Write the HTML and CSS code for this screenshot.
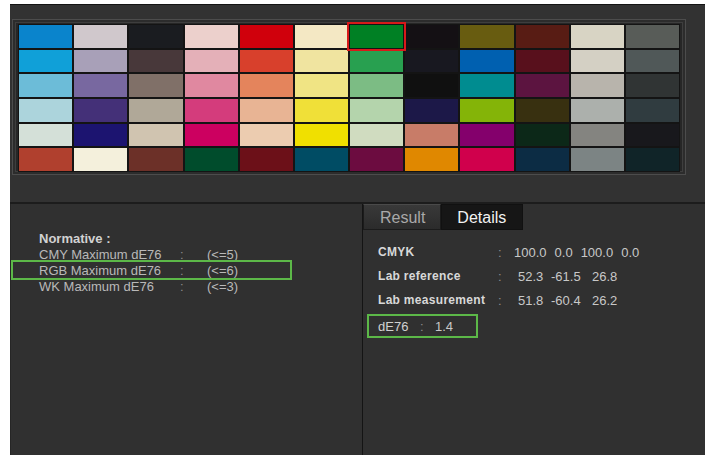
FILE: index.html
```html
<!DOCTYPE html>
<html lang="en">
<head>
<meta charset="utf-8">
<title>Colour check</title>
<link rel="stylesheet" href="styles.css">
</head>
<body>
<div class="app">
  <div class="palette">
    <div class="frame">
      <div class="grid">
        <div class="sw" style="background:#0a84cc"></div>
        <div class="sw" style="background:#d0c8cc"></div>
        <div class="sw" style="background:#1a1c20"></div>
        <div class="sw" style="background:#ecd0cc"></div>
        <div class="sw" style="background:#d0000c"></div>
        <div class="sw" style="background:#f4e8c4"></div>
        <div class="sw selected" style="background:#008024"></div>
        <div class="sw" style="background:#141014"></div>
        <div class="sw" style="background:#685c10"></div>
        <div class="sw" style="background:#581c14"></div>
        <div class="sw" style="background:#d8d4c4"></div>
        <div class="sw" style="background:#585c58"></div>

        <div class="sw" style="background:#10a0d8"></div>
        <div class="sw" style="background:#a8a0b8"></div>
        <div class="sw" style="background:#48383a"></div>
        <div class="sw" style="background:#e4b0b8"></div>
        <div class="sw" style="background:#d8402c"></div>
        <div class="sw" style="background:#f0e4a0"></div>
        <div class="sw" style="background:#28a050"></div>
        <div class="sw" style="background:#181820"></div>
        <div class="sw" style="background:#0060b0"></div>
        <div class="sw" style="background:#58101c"></div>
        <div class="sw" style="background:#d4d0c4"></div>
        <div class="sw" style="background:#505858"></div>

        <div class="sw" style="background:#6cbcd8"></div>
        <div class="sw" style="background:#7868a0"></div>
        <div class="sw" style="background:#807068"></div>
        <div class="sw" style="background:#e088a0"></div>
        <div class="sw" style="background:#e4845c"></div>
        <div class="sw" style="background:#f0e484"></div>
        <div class="sw" style="background:#7cbc84"></div>
        <div class="sw" style="background:#101010"></div>
        <div class="sw" style="background:#008c90"></div>
        <div class="sw" style="background:#5c1440"></div>
        <div class="sw" style="background:#b8b4ac"></div>
        <div class="sw" style="background:#303434"></div>

        <div class="sw" style="background:#acd4dc"></div>
        <div class="sw" style="background:#443078"></div>
        <div class="sw" style="background:#b0a898"></div>
        <div class="sw" style="background:#d43c7c"></div>
        <div class="sw" style="background:#e8b494"></div>
        <div class="sw" style="background:#f0e038"></div>
        <div class="sw" style="background:#b4d4ac"></div>
        <div class="sw" style="background:#1c1848"></div>
        <div class="sw" style="background:#84b408"></div>
        <div class="sw" style="background:#383010"></div>
        <div class="sw" style="background:#acb0ac"></div>
        <div class="sw" style="background:#303c40"></div>

        <div class="sw" style="background:#d4e0d8"></div>
        <div class="sw" style="background:#1c1470"></div>
        <div class="sw" style="background:#d0c4b0"></div>
        <div class="sw" style="background:#cc0060"></div>
        <div class="sw" style="background:#ecccb0"></div>
        <div class="sw" style="background:#f0e000"></div>
        <div class="sw" style="background:#d0dcc0"></div>
        <div class="sw" style="background:#c87c68"></div>
        <div class="sw" style="background:#84006c"></div>
        <div class="sw" style="background:#0c2818"></div>
        <div class="sw" style="background:#848480"></div>
        <div class="sw" style="background:#18181c"></div>

        <div class="sw" style="background:#b0402e"></div>
        <div class="sw" style="background:#f4f0dc"></div>
        <div class="sw" style="background:#6c3028"></div>
        <div class="sw" style="background:#004c2c"></div>
        <div class="sw" style="background:#6c1018"></div>
        <div class="sw" style="background:#004c64"></div>
        <div class="sw" style="background:#6c0c40"></div>
        <div class="sw" style="background:#e08800"></div>
        <div class="sw" style="background:#d0004c"></div>
        <div class="sw" style="background:#0c2c44"></div>
        <div class="sw" style="background:#7c8484"></div>
        <div class="sw" style="background:#102428"></div>
      </div>
    </div>
  </div>

  <div class="lower">
    <div class="normative">
      <div class="norm-title">Normative :</div>
      <div class="norm-row"><span class="n-label">CMY Maximum dE76</span><span class="n-colon">:</span><span class="n-val">(&lt;=5)</span></div>
      <div class="norm-row hl"><span class="n-label">RGB Maximum dE76</span><span class="n-colon">:</span><span class="n-val">(&lt;=6)</span></div>
      <div class="norm-row"><span class="n-label">WK Maximum dE76</span><span class="n-colon">:</span><span class="n-val">(&lt;=3)</span></div>
    </div>

    <div class="details">
      <div class="tabs">
        <div class="tab">Result</div>
        <div class="tab active">Details</div>
      </div>
      <div class="rows">
        <div class="drow">
          <span class="d-label">CMYK</span><span class="d-colon">:</span>
          <span class="d-vals cmyk"><span>100.0</span><span>0.0</span><span>100.0</span><span>0.0</span></span>
        </div>
        <div class="drow">
          <span class="d-label">Lab reference</span><span class="d-colon">:</span>
          <span class="d-vals lab"><span>52.3</span><span>-61.5</span><span>26.8</span></span>
        </div>
        <div class="drow">
          <span class="d-label">Lab measurement</span><span class="d-colon">:</span>
          <span class="d-vals lab"><span>51.8</span><span>-60.4</span><span>26.2</span></span>
        </div>
        <div class="de-box">
          <span class="de-label">dE76</span><span class="de-colon">:</span><span class="de-val">1.4</span>
        </div>
      </div>
    </div>
  </div>
</div>
</body>
</html>
```

FILE: styles.css
```css
html, body {
  margin: 0;
  padding: 0;
  background: #ffffff;
}

body {
  font-family: "Liberation Sans", Arial, sans-serif;
}

.app {
  margin: 4px 0 0 10px;
  width: 695px;
  height: 451px;
  background: #323232;
  border-top: 1px solid #141414;
  display: flex;
  flex-direction: column;
  overflow: hidden;
}

/* colour patch chart */
.palette {
  height: 199px;
  flex: none;
  padding: 14px 0 0 2px;
  box-sizing: border-box;
  border-bottom: 2px solid #1c1c1c;
}

.frame {
  width: 674px;
  box-sizing: border-box;
  border: 1px solid #4c4c4c;
  box-shadow: inset 0 0 0 2px #2c2c2c, inset 0 0 0 3px #3e3e3e;
  background: #262626;
  padding: 5px 6px 3px 6px;
}

.grid {
  display: grid;
  grid-template-columns: repeat(12, 1fr);
  grid-template-rows: repeat(6, 1fr);
  gap: 2px;
  height: 146px;
  background: #151515;
}

.sw {
  box-shadow: 0 0 0 1px #141414;
}

.sw.selected {
  position: relative;
  z-index: 1;
  outline: 2px solid #d81a1a;
  outline-offset: 1px;
}

/* lower half */
.lower {
  flex: 1;
  display: flex;
  background: #303030;
}

.normative {
  width: 353px;
  flex: none;
  border-left: 1px solid #262626;
  border-right: 1px solid #141414;
  box-sizing: border-box;
  padding: 27px 0 0 28px;
  font-size: 13px;
  line-height: 16px;
  color: #b9b9b9;
}

.norm-title {
  font-weight: bold;
  color: #d2d2d2;
}

.norm-row {
  display: flex;
  position: relative;
}

.n-label {
  width: 141px;
}

.n-colon {
  width: 27px;
  color: #8a8a8a;
}

.norm-row.hl::after {
  content: "";
  position: absolute;
  left: -28px;
  top: -3px;
  width: 281px;
  height: 20px;
  box-sizing: border-box;
  border: 2px solid #5cb848;
}

.details {
  flex: 1;
  display: flex;
  flex-direction: column;
}

.tabs {
  display: flex;
  height: 26px;
}

.tab {
  box-sizing: border-box;
  height: 26px;
  padding: 0 15px 0 16px;
  font-size: 16px;
  line-height: 25px;
  color: #a9a9a9;
  background: linear-gradient(#393939, #2b2b2b);
  border: 1px solid #1b1b1b;
  border-top-color: #4a4a4a;
}

.tab.active {
  color: #f2f2f2;
  background: #161616;
  border-color: #111111;
  padding: 0 16px 0 15px;
}

.rows {
  padding: 10px 0 0 15px;
  font-size: 13px;
  color: #c8c8c8;
}

.drow {
  display: flex;
  height: 24px;
  align-items: center;
}

.d-label {
  width: 120px;
  font-size: 12px;
  font-weight: bold;
  letter-spacing: 0.3px;
  color: #d8d8d8;
}

.d-colon {
  width: 16px;
  color: #8c8c8c;
}

.d-vals {
  display: flex;
}

.d-vals.cmyk span {
  margin-right: 8px;
}

.d-vals.lab {
  padding-left: 4px;
}

.d-vals.lab span:nth-child(1) {
  width: 33px;
}

.d-vals.lab span:nth-child(2) {
  width: 41px;
}

.de-box {
  margin: 2px 0 0 -11px;
  width: 111px;
  height: 24px;
  box-sizing: border-box;
  border: 2px solid #5cb848;
  display: flex;
  align-items: center;
  padding-left: 9px;
}

.de-label {
  width: 42px;
  color: #d0d0d0;
}

.de-colon {
  width: 15px;
  color: #8c8c8c;
}
```
